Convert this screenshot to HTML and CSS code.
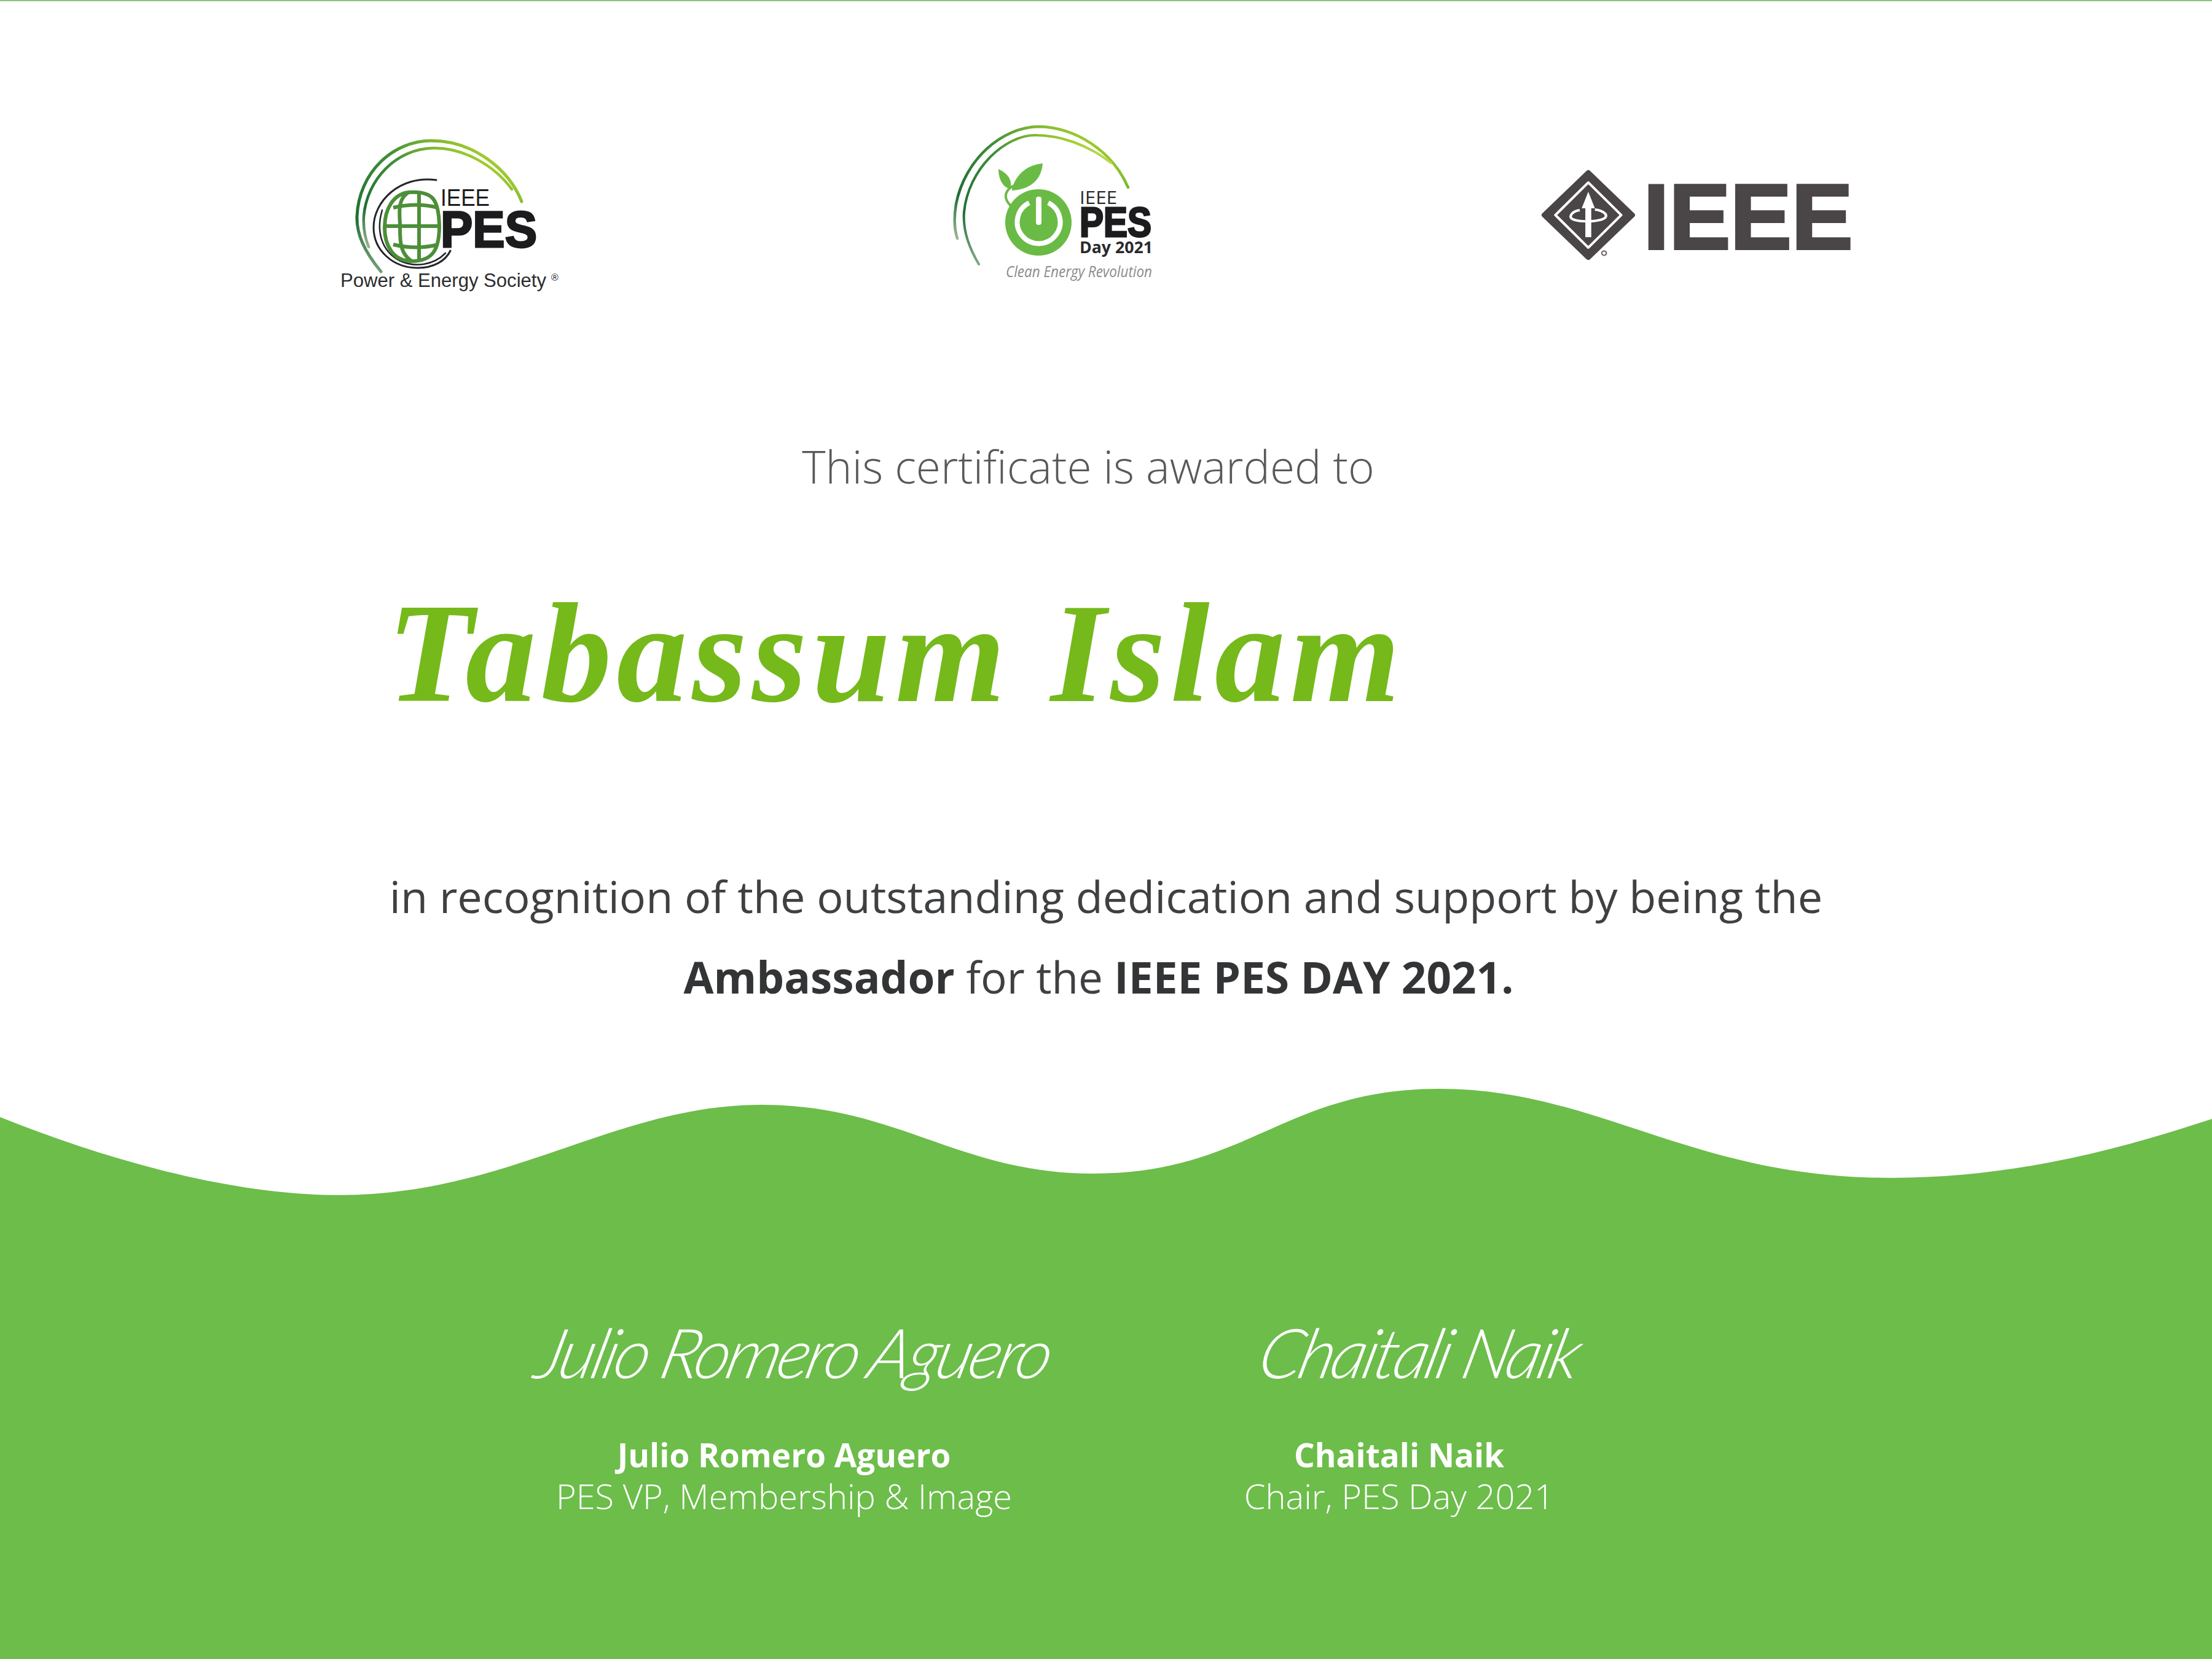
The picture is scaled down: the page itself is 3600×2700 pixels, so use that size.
FILE: index.html
```html
<!DOCTYPE html>
<html>
<head>
    <title>IEEE PES Day 2021 Certificate</title>
    <link rel="stylesheet" href="styles.css">
</head>
<body>

<div class="certificate">

    <div class="logos">
        <!-- IEEE PES -->
        <svg class="logo-pes" width="480" height="320" viewBox="0 0 480 320">
            <defs>
                <linearGradient id="arc1" x1="0" y1="1" x2="1" y2="0">
                    <stop offset="0" stop-color="#9fb89a"/>
                    <stop offset="0.2" stop-color="#1f6e33"/>
                    <stop offset="0.55" stop-color="#3f9138"/>
                    <stop offset="0.85" stop-color="#a6cf2e"/>
                    <stop offset="1" stop-color="#e4efb0"/>
                </linearGradient>
            </defs>
            <path class="arc" stroke="url(#arc1)" stroke-width="5" d="M120 262 C92 228 80 200 81 172 C84 100 140 49 202 49 C270 49 328 95 349 148"/>
            <path class="arc" stroke="url(#arc1)" stroke-width="4.5" d="M100 222 C93 205 91 190 92 172 C97 112 145 62 205 61 C255 60 305 90 333 128"/>
            <path class="arc" stroke="#24242a" stroke-width="3" d="M210 113 C150 105 108 148 108 190 C108 228 140 256 180 256 C205 256 225 245 233 228"/>
            <path class="arc" stroke="#24242a" stroke-width="2.5" d="M122 162 C112 195 120 228 150 244 C175 256 205 252 225 232"/>
            <g class="globe">
                <path d="M165 133 C205 130 214 145 215 188 C215 225 205 245 170 245 C140 245 126 220 126 190 C126 160 140 136 165 133Z"/>
                <path d="M165 133 C145 145 151 170 151 188 C151 210 150 232 170 245"/>
                <path d="M182 133 V245"/>
                <path d="M128 188 H215"/>
                <path d="M140 158 C165 152 190 152 213 158"/>
                <path d="M140 218 C165 224 190 224 213 218"/>
            </g>
            <text class="logo-ieee" x="217" y="155" font-size="38" textLength="80" lengthAdjust="spacingAndGlyphs">IEEE</text>
            <text class="logo-heavy" x="217" y="222" font-size="84" textLength="157" lengthAdjust="spacingAndGlyphs">PES</text>
            <text class="logo-society" x="54" y="287" font-size="31" textLength="335" lengthAdjust="spacingAndGlyphs">Power &amp; Energy Society</text>
            <text class="logo-society" x="397" y="277" font-size="16">®</text>
        </svg>

        <!-- PES Day 2021 -->
        <svg class="logo-day" width="420" height="300" viewBox="0 0 420 300">
            <path class="arc" stroke="url(#arc1)" stroke-width="4.5" d="M48 208 C42 190 43 170 46 152 C60 80 120 27 180 26 C240 27 300 65 326 125"/>
            <path class="arc" stroke="url(#arc1)" stroke-width="4" d="M83 250 C65 220 57 190 59 165 C66 95 125 40 175 40 C215 40 260 55 298 85"/>
            <path class="day-green" d="M137 127 C145 100 165 88 187 86 C185 110 170 128 137 130Z"/>
            <path class="day-green" d="M115 95 C135 105 136 115 135 128 C122 125 115 112 115 95Z"/>
            <path class="day-stem" d="M140 122 C125 130 122 142 135 155"/>
            <circle class="day-green" cx="180" cy="182" r="54"/>
            <path class="day-ring" d="M165 150 A35 35 0 1 0 196 150"/>
            <rect class="day-bar" x="176" y="140" width="9" height="46" rx="4"/>
            <text class="logo-thin" x="247" y="152" font-size="30" textLength="61" lengthAdjust="spacingAndGlyphs">IEEE</text>
            <text class="logo-heavy" x="247" y="205" font-size="68" textLength="117" lengthAdjust="spacingAndGlyphs">PES</text>
            <text class="logo-year" x="247" y="232" font-size="27" textLength="119" lengthAdjust="spacingAndGlyphs">Day 2021</text>
            <text class="logo-tag" x="127" y="271" font-size="25" textLength="238" lengthAdjust="spacingAndGlyphs">Clean Energy Revolution</text>
        </svg>

        <!-- IEEE -->
        <svg class="logo-ieee-main" width="560" height="200" viewBox="0 0 523 200" preserveAspectRatio="none">
            <path class="ieee-fill" d="M98 41 L165 110 L98 179 L31 110Z"/>
            <path class="ieee-line" d="M98 57 L148 110 L98 163 L48 110Z"/>
            <rect class="ieee-white" x="93.5" y="92" width="9" height="54"/>
            <path class="ieee-white" d="M98 72 L108 99 L88 99Z"/>
            <path class="ieee-swirl" d="M85 102 C72 104 70 112 72 115 C78 122 115 122 124 114 C128 108 118 102 108 101"/>
            <circle class="ieee-mark" cx="122" cy="172" r="3.5"/>
            <text class="logo-main" x="182" y="165" font-size="150" textLength="318" lengthAdjust="spacingAndGlyphs">IEEE</text>
        </svg>
    </div>

    <p class="intro">This certificate is awarded to</p>

    <h1 class="recipient">Tabassum Islam</h1>

    <p class="reason reason-first">in recognition of the outstanding dedication and support by being the</p>
    <p class="reason reason-second"><b>Ambassador</b> for the <b>IEEE PES DAY 2021.</b></p>

    <svg class="wave" width="3600" height="180" viewBox="0 1770 3600 180">
        <path d="M0 1818 C180 1890 380 1945 551 1945 C830 1945 1000 1798 1240 1798 C1460 1798 1560 1910 1780 1910 C2030 1910 2090 1772 2342 1772 C2600 1772 2750 1917 3077 1917 C3280 1917 3450 1870 3600 1821 V1950 H0Z"/>
    </svg>

    <div class="footer">
        <div class="signer signer-vp">
            <div class="signature">Julio Romero Aguero</div>
            <div class="signer-name">Julio Romero Aguero</div>
            <div class="signer-role">PES VP, Membership &amp; Image</div>
        </div>
        <div class="signer signer-chair">
            <div class="signature">Chaitali Naik</div>
            <div class="signer-name">Chaitali Naik</div>
            <div class="signer-role">Chair, PES Day 2021</div>
        </div>
    </div>

</div>

</body>
</html>
```

FILE: styles.css
```css
body {
    margin: 0;
    background-color: #fff;
    font-family: "Open Sans", "Liberation Sans", sans-serif;
}

.certificate {
    width: 3600px;
    height: 2700px;
    border-top: 2px solid #8fc47a;
    box-sizing: border-box;
    overflow: hidden;
    display: flex;
    flex-direction: column;
}

/* logos */
.logos {
    display: flex;
    align-items: flex-start;
    gap: 530px;
    height: 322px;
    padding: 178px 0 0 500px;
}

.logos svg {
    overflow: visible;
}

.logo-ieee-main {
    margin-top: 60px;
    margin-left: 20px;
}

.arc {
    fill: none;
    stroke-linecap: round;
}

.globe path {
    fill: none;
    stroke: #4c8f38;
    stroke-width: 6;
}

.logo-ieee {
    font-family: "Liberation Sans", sans-serif;
    fill: #1c1c1e;
}

.logo-heavy {
    font-family: "Liberation Sans", sans-serif;
    font-weight: bold;
    fill: #1c1c1e;
    stroke: #1c1c1e;
    stroke-width: 3;
}

.logo-society {
    font-family: "Liberation Sans", sans-serif;
    fill: #2c2c2e;
}

.day-green {
    fill: #6abb45;
}

.day-stem {
    fill: none;
    stroke: #6abb45;
    stroke-width: 4;
}

.day-ring {
    fill: none;
    stroke: #fff;
    stroke-width: 8;
}

.day-bar {
    fill: #fff;
}

.logo-thin {
    font-family: "Open Sans", sans-serif;
    fill: #2a2a2c;
}

.logo-year {
    font-family: "Open Sans", sans-serif;
    font-weight: bold;
    fill: #2a2a2c;
}

.logo-tag {
    font-family: "Open Sans", sans-serif;
    font-style: italic;
    fill: #8a8a8c;
}

.ieee-fill {
    fill: #4a4546;
    stroke: #4a4546;
    stroke-width: 8;
    stroke-linejoin: round;
}

.ieee-line {
    fill: none;
    stroke: #fff;
    stroke-width: 4;
    stroke-linejoin: round;
}

.ieee-white {
    fill: #fff;
}

.ieee-swirl {
    fill: none;
    stroke: #fff;
    stroke-width: 4;
}

.ieee-mark {
    fill: none;
    stroke: #6b6667;
    stroke-width: 2;
}

.logo-main {
    font-family: "Liberation Sans", sans-serif;
    font-weight: bold;
    fill: #4a4546;
    stroke: #4a4546;
    stroke-width: 4;
}

/* body text */
.intro {
    margin: 212px 0 0;
    padding-right: 58px;
    text-align: center;
    font-size: 73px;
    line-height: 90px;
    font-weight: 300;
    color: #58595b;
}

.recipient {
    margin: 130px 0 0;
    padding-left: 630px;
    font-family: "Liberation Serif", serif;
    font-style: italic;
    font-weight: bold;
    font-size: 230px;
    line-height: 260px;
    letter-spacing: 8px;
    color: #75b91b;
}

.reason {
    margin: 0;
    text-align: center;
    font-size: 72px;
    line-height: 131px;
    color: #3f4042;
}

.reason-first {
    margin-top: 199px;
}

.reason-second {
    padding-right: 24px;
    font-size: 71px;
}

.reason b {
    color: #333436;
}

/* footer */
.wave {
    display: block;
    margin-top: auto;
    flex-shrink: 0;
}

.wave path {
    fill: #6cbd4a;
}

.footer {
    height: 750px;
    flex-shrink: 0;
    background-color: #6cbd4a;
    display: flex;
    gap: 201px;
    padding: 170px 0 0 826px;
    color: #fff;
    box-sizing: border-box;
}

.signer {
    text-align: center;
    font-size: 56px;
    line-height: 67px;
}

.signer-vp {
    width: 900px;
}

.signer-chair {
    width: 700px;
}

.signature {
    height: 170px;
    margin-bottom: 44px;
    font-family: "Lato", sans-serif;
    font-style: italic;
    font-weight: 300;
    font-size: 112px;
    line-height: 160px;
    letter-spacing: -5px;
    white-space: nowrap;
    transform: skewX(-14deg);
}

.signer-vp .signature {
    padding-left: 32px;
}

.signer-chair .signature {
    padding-left: 66px;
}

.signer-name {
    font-weight: bold;
    font-size: 53px;
}

.signer-role {
    font-weight: 300;
}
```
